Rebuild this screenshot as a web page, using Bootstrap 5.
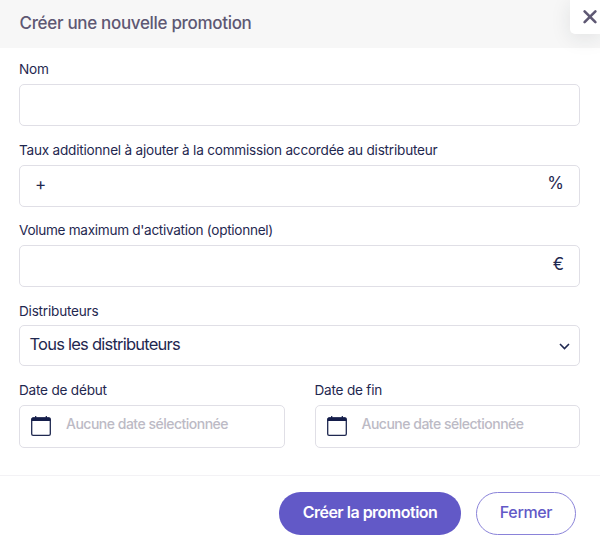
<!DOCTYPE html>
<html lang="fr">
<head>
<meta charset="utf-8">
<meta name="viewport" content="width=device-width, initial-scale=1">
<title>Créer une nouvelle promotion</title>
<link href="https://cdn.jsdelivr.net/npm/bootstrap@5.3.0/dist/css/bootstrap.min.css" rel="stylesheet">
<style>
  body { font-family: Inter, "Liberation Sans", sans-serif; color: #1f2850; background: #fff; }
  .promo-dialog { height: 545px; }
  .promo-head { height: 48px; background: #f7f7f7; padding: 0 19.5px 2px; }
  .promo-title { font-size: 17px; font-weight: 500; letter-spacing: -.32px; color: #5e5873; line-height: 20px; }
  .promo-close { top: 0; right: 0; width: 30px; height: 34px; background: #fff; border-radius: 0 0 0 5px; box-shadow: 0 4px 20px rgba(34,41,47,.1); }
  .promo-body { padding: 12px 20px 0 19px; }
  .promo-label { height: 24px; line-height: 19px; font-size: 13.6px; letter-spacing: -.22px; margin: 0; white-space: nowrap; color: #1f2850; }
  .promo-label-volume { letter-spacing: -.3px; }
  .promo-field { height: 42px; border: 1px solid #e0dfe6; border-radius: 5px; background: #fff; }
  .promo-group { margin-bottom: 14.5px; }
  .promo-symbol { font-size: 17px; line-height: 20px; }
  .promo-plus { padding-bottom: 4px; }
  .promo-percent { padding-bottom: 5px; }
  .promo-amount { padding: 0 15px; }
  .promo-select { height: 41px; margin-top: -.3px; font-size: 16.5px; padding: 0 9.5px; }
  .promo-choice { letter-spacing: -.77px; padding-bottom: 3px; }
  .promo-date { height: 43px; padding-left: 11px; }
  .promo-hint { font-size: 14px; font-weight: 500; letter-spacing: -.5px; color: #bcbac5; margin-left: 15px; line-height: 20px; padding-bottom: 4px; }
  .promo-dates { column-gap: 30px; }
  .promo-foot { height: 70px; border-top: 1px solid #f3f2f5; padding: 16px 24px 0 0; gap: 15px; }
  .promo-btn { height: 43px; padding: 0 0 4px; border-radius: 22px; font-size: 16px; letter-spacing: -.5px; line-height: 20px; }
  .promo-save { width: 182px; color: #fff; background: #6259c7; font-weight: 600; }
  .promo-cancel { width: 100px; color: #6259c7; border-color: #8a83d9; font-weight: 500; letter-spacing: -.35px; }
</style>
</head>
<body>
<main class="promo-dialog position-relative d-flex flex-column overflow-hidden">
  <header class="promo-head d-flex align-items-center">
    <h1 class="promo-title m-0">Créer une nouvelle promotion</h1>
  </header>
  <button type="button" class="promo-close position-absolute border-0 p-0" aria-label="Fermer la fenêtre">
    <svg class="d-block" width="30" height="34" viewBox="0 0 30 34" fill="none" stroke="#5e5873" stroke-width="2.6" stroke-linecap="round"><path d="M14.6 11.3 25.4 22.1M25.4 11.3 14.6 22.1"/></svg>
  </button>
  <form class="promo-body flex-grow-1">
    <div class="promo-group">
      <label class="promo-label d-block" for="nom">Nom</label>
      <input id="nom" class="promo-field form-control shadow-none" type="text">
    </div>
    <div class="promo-group">
      <div class="promo-label">Taux additionnel à ajouter à la commission accordée au distributeur</div>
      <div class="promo-field promo-amount d-flex align-items-center justify-content-between">
        <span class="promo-symbol promo-plus">+</span><span class="promo-symbol promo-percent">%</span>
      </div>
    </div>
    <div class="promo-group">
      <div class="promo-label promo-label-volume">Volume maximum d'activation (optionnel)</div>
      <div class="promo-field promo-amount d-flex align-items-center justify-content-end">
        <span class="promo-symbol pb-1">€</span>
      </div>
    </div>
    <div class="promo-group">
      <div class="promo-label">Distributeurs</div>
      <div class="promo-field promo-select d-flex align-items-center justify-content-between">
        <span class="promo-choice">Tous les distributeurs</span>
        <svg width="11" height="8" viewBox="0 0 11 8" fill="none" stroke="#1f2850" stroke-width="1.6"><path d="m1 2 4.5 4.5L10 2"/></svg>
      </div>
    </div>
    <div class="promo-dates d-flex">
      <div class="flex-fill">
        <div class="promo-label">Date de début</div>
        <div class="promo-field promo-date d-flex align-items-center">
          <svg width="20" height="20" viewBox="0 0 20 20"><rect x=".7" y="2" width="18.6" height="17.3" rx="1.4" fill="none" stroke="#1f2850" stroke-width="1.3"/><path d="M.5 5V3q0-1.6 1.6-1.6h2V0h1.2v1.4h9.4V0h1.2v1.4h2q1.6 0 1.6 1.6v2z" fill="#141d4a"/></svg>
          <span class="promo-hint">Aucune date sélectionnée</span>
        </div>
      </div>
      <div class="flex-fill">
        <div class="promo-label">Date de fin</div>
        <div class="promo-field promo-date d-flex align-items-center">
          <svg width="20" height="20" viewBox="0 0 20 20"><rect x=".7" y="2" width="18.6" height="17.3" rx="1.4" fill="none" stroke="#1f2850" stroke-width="1.3"/><path d="M.5 5V3q0-1.6 1.6-1.6h2V0h1.2v1.4h9.4V0h1.2v1.4h2q1.6 0 1.6 1.6v2z" fill="#141d4a"/></svg>
          <span class="promo-hint">Aucune date sélectionnée</span>
        </div>
      </div>
    </div>
  </form>
  <footer class="promo-foot d-flex justify-content-end align-items-start">
    <button type="button" class="promo-btn promo-save btn">Créer la promotion</button>
    <button type="button" class="promo-btn promo-cancel btn">Fermer</button>
  </footer>
</main>
<script src="https://cdn.jsdelivr.net/npm/bootstrap@5.3.0/dist/js/bootstrap.bundle.min.js"></script>
</body>
</html>
